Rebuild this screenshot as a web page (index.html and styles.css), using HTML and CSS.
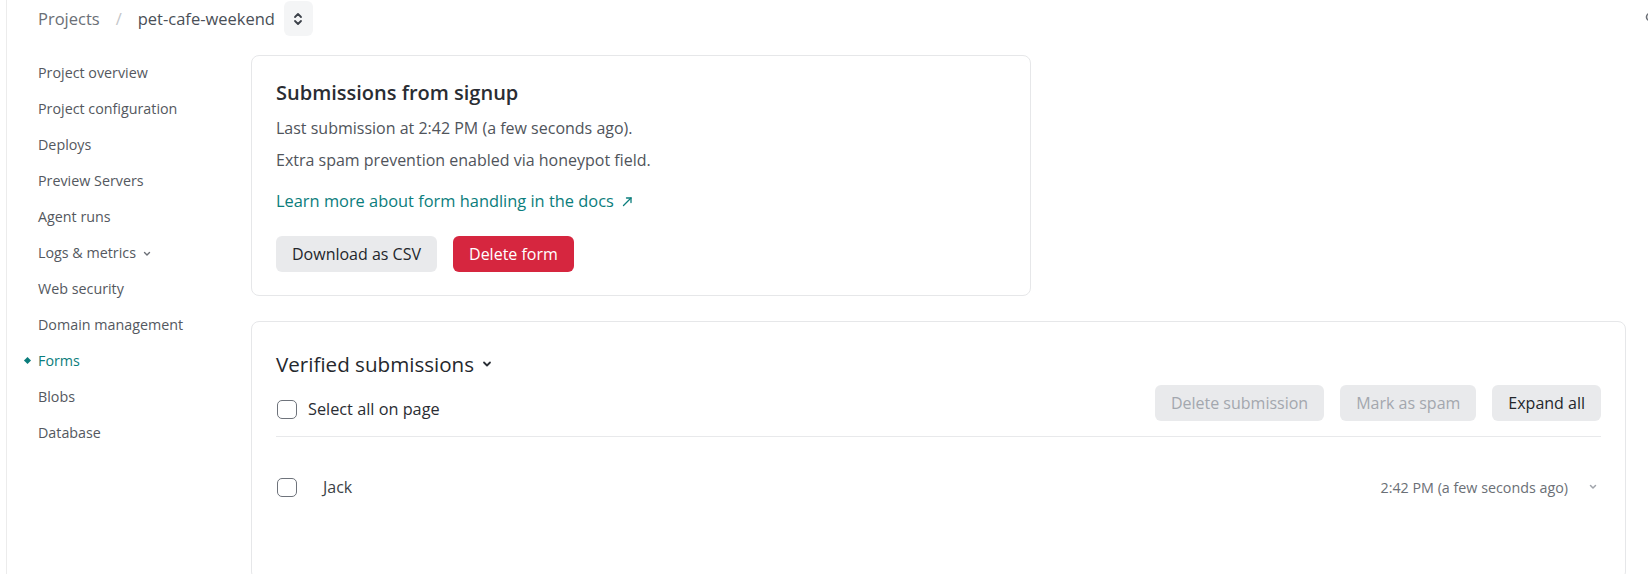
FILE: index.html
```html
<!DOCTYPE html>
<html lang="en">
<head>
    <meta charset="UTF-8">
    <meta name="viewport" content="width=device-width, initial-scale=1.0">
    <title>Forms - pet-cafe-weekend</title>
    <link rel="stylesheet" href="styles.css">
</head>
<body>
    <div class="app">
        <header class="topbar">
            <nav class="crumbs">
                <a class="crumb" href="#">Projects</a>
                <span class="crumb-sep">/</span>
                <span class="crumb-current">pet-cafe-weekend</span>
                <button class="switcher" type="button" aria-label="Switch project">
                    <svg width="10" height="14" viewBox="0 0 10 14" fill="none" stroke="#3c4149" stroke-width="1.8" stroke-linecap="round" stroke-linejoin="round">
                        <polyline points="2,5 5,2 8,5"/>
                        <polyline points="2,9 5,12 8,9"/>
                    </svg>
                </button>
            </nav>
            <span class="corner-icon">
                <svg width="12" height="14" viewBox="0 0 12 14" fill="none" stroke="#6b6f76" stroke-width="1.6">
                    <circle cx="6" cy="5" r="3.5"/>
                    <line x1="6" y1="8.5" x2="6" y2="12"/>
                </svg>
            </span>
        </header>

        <div class="layout">
            <aside class="sidebar">
                <ul class="side-nav">
                    <li><a href="#">Project overview</a></li>
                    <li><a href="#">Project configuration</a></li>
                    <li><a href="#">Deploys</a></li>
                    <li><a href="#">Preview Servers</a></li>
                    <li><a href="#">Agent runs</a></li>
                    <li>
                        <a href="#">Logs &amp; metrics
                            <svg class="nav-caret" width="8" height="6" viewBox="0 0 8 6" fill="none" stroke="#6b6f76" stroke-width="1.4" stroke-linecap="round" stroke-linejoin="round">
                                <polyline points="1.5,1.5 4,4 6.5,1.5"/>
                            </svg>
                        </a>
                    </li>
                    <li><a href="#">Web security</a></li>
                    <li><a href="#">Domain management</a></li>
                    <li class="active"><a href="#">Forms</a></li>
                    <li><a href="#">Blobs</a></li>
                    <li><a href="#">Database</a></li>
                </ul>
            </aside>

            <main class="main">
                <section class="card form-card">
                    <h2 class="card-title">Submissions from signup</h2>
                    <p class="card-text">Last submission at 2:42 PM (a few seconds ago).</p>
                    <p class="card-text">Extra spam prevention enabled via honeypot field.</p>
                    <p class="doc-link">
                        <a href="#">Learn more about form handling in the docs
                            <svg width="11" height="11" viewBox="0 0 11 11" fill="none" stroke="currentColor" stroke-width="1.3" stroke-linecap="round">
                                <line x1="1.5" y1="9.5" x2="9" y2="2"/>
                                <polyline points="4.5,2 9,2 9,6.5"/>
                            </svg>
                        </a>
                    </p>
                    <div class="actions">
                        <button class="btn" type="button">Download as CSV</button>
                        <button class="btn btn-danger" type="button">Delete form</button>
                    </div>
                </section>

                <section class="card subs-card">
                    <h2 class="subs-title">Verified submissions
                        <svg width="10" height="8" viewBox="0 0 10 8" fill="none" stroke="#2b2f36" stroke-width="1.8" stroke-linecap="round" stroke-linejoin="round">
                            <polyline points="2,2.5 5,5.5 8,2.5"/>
                        </svg>
                    </h2>
                    <div class="toolbar">
                        <label class="check">
                            <input type="checkbox">
                            <span>Select all on page</span>
                        </label>
                        <div class="toolbar-actions">
                            <button class="btn" type="button" disabled>Delete submission</button>
                            <button class="btn" type="button" disabled>Mark as spam</button>
                            <button class="btn" type="button">Expand all</button>
                        </div>
                    </div>
                    <div class="submission">
                        <input type="checkbox">
                        <span class="sub-name">Jack</span>
                        <span class="sub-time">2:42 PM (a few seconds ago)</span>
                        <span class="sub-toggle">
                            <svg width="10" height="8" viewBox="0 0 10 8" fill="none" stroke="#a0a4ab" stroke-width="1.5" stroke-linecap="round" stroke-linejoin="round">
                                <polyline points="2.5,2.5 5,5 7.5,2.5"/>
                            </svg>
                        </span>
                    </div>
                </section>
            </main>
        </div>
    </div>
</body>
</html>
```

FILE: styles.css
```css
body {
    margin: 0;
    padding: 0;
    background: #fff;
    color: #4b4f56;
    font-family: 'Open Sans', 'Noto Sans', sans-serif;
    overflow: hidden;
}

a {
    text-decoration: none;
    color: inherit;
}

.app {
    margin-left: 6px;
    border-left: 1px solid #ececec;
    min-height: 100vh;
}

/* top bar with breadcrumbs */
.topbar {
    height: 37px;
    display: flex;
    align-items: center;
    justify-content: space-between;
    padding-left: 31px;
}

.crumbs {
    display: flex;
    align-items: center;
    font-size: 16.5px;
}

.crumb {
    color: #6b6f76;
}

.crumb-sep {
    color: #c4c6c9;
    margin: 0 16px;
}

.crumb-current {
    color: #4a4f57;
}

.switcher {
    margin-left: 9px;
    width: 29px;
    height: 35px;
    border: 0;
    border-radius: 6px;
    background: #f4f5f6;
    display: flex;
    align-items: center;
    justify-content: center;
    padding: 0;
}

.corner-icon {
    margin-right: -8px;
    display: flex;
}

/* sidebar + content */
.layout {
    display: flex;
    margin-top: 18px;
}

.sidebar {
    width: 244px;
    flex-shrink: 0;
    padding-left: 31px;
    box-sizing: border-box;
}

.side-nav {
    list-style: none;
    margin: 0;
    padding: 0;
}

.side-nav li {
    height: 36px;
    line-height: 36px;
    font-size: 14.3px;
    position: relative;
}

.side-nav a {
    color: #545860;
}

.nav-caret {
    margin-left: 3px;
    vertical-align: middle;
}

.side-nav .active a {
    color: #0b7d7c;
}

.side-nav .active::before {
    content: "";
    position: absolute;
    left: -13px;
    top: 15px;
    width: 5px;
    height: 5px;
    background: #0b7d7c;
    transform: rotate(45deg);
}

.main {
    flex: 1;
    padding-right: 22px;
}

.card {
    background: #fff;
    border: 1px solid #e6e7e9;
    border-radius: 8px;
}

/* form summary */
.form-card {
    max-width: 780px;
    box-sizing: border-box;
    padding: 24px 24px 23px;
}

.card-title {
    margin: 0 0 10px;
    font-size: 20px;
    line-height: 26px;
    font-weight: 600;
    color: #2a2d33;
}

.card-text {
    margin: 0 0 8px;
    font-size: 16px;
    line-height: 24px;
    color: #50545b;
}

.doc-link {
    margin: 17px 0 0;
    font-size: 16.4px;
    line-height: 24px;
}

.doc-link a {
    color: #0b7d7c;
    font-weight: 500;
}

.doc-link svg {
    margin-left: 4px;
}

.actions {
    display: flex;
    gap: 16px;
    margin-top: 23px;
}

.btn {
    height: 36px;
    padding: 0 16px;
    border: 0;
    border-radius: 6px;
    background: #e9eaec;
    color: #23262b;
    font-family: inherit;
    font-size: 16px;
}

.btn:disabled {
    color: #a3a7ae;
}

.btn-danger {
    background: #d6263f;
    color: #fff;
}

/* submissions list */
.subs-card {
    margin-top: 25px;
    padding: 28px 24px 80px;
}

.subs-title {
    margin: 0;
    font-size: 20.6px;
    line-height: 28px;
    font-weight: 500;
    color: #25282d;
    display: flex;
    align-items: center;
    gap: 8px;
}

.toolbar {
    display: flex;
    justify-content: space-between;
    align-items: flex-end;
    margin-top: 7px;
    padding-bottom: 15px;
    border-bottom: 1px solid #e8e9eb;
}

.check {
    display: flex;
    align-items: center;
    gap: 11px;
    font-size: 16.3px;
    color: #2a2d33;
    margin-bottom: 1px;
}

input[type="checkbox"] {
    appearance: none;
    width: 20px;
    height: 19px;
    margin: 0 0 0 1px;
    border: 1.5px solid #6e737b;
    border-radius: 5px;
    box-sizing: border-box;
    background: #fff;
}

.toolbar-actions {
    display: flex;
    gap: 16px;
}

.submission {
    display: flex;
    align-items: center;
    padding-top: 38px;
    height: 24px;
}

.sub-name {
    margin-left: 26px;
    font-size: 16px;
    color: #3b3f46;
}

.sub-time {
    margin-left: auto;
    font-size: 14.3px;
    color: #6b6f76;
}

.sub-toggle {
    width: 16px;
    margin-left: 17px;
    display: flex;
    justify-content: center;
}
```
